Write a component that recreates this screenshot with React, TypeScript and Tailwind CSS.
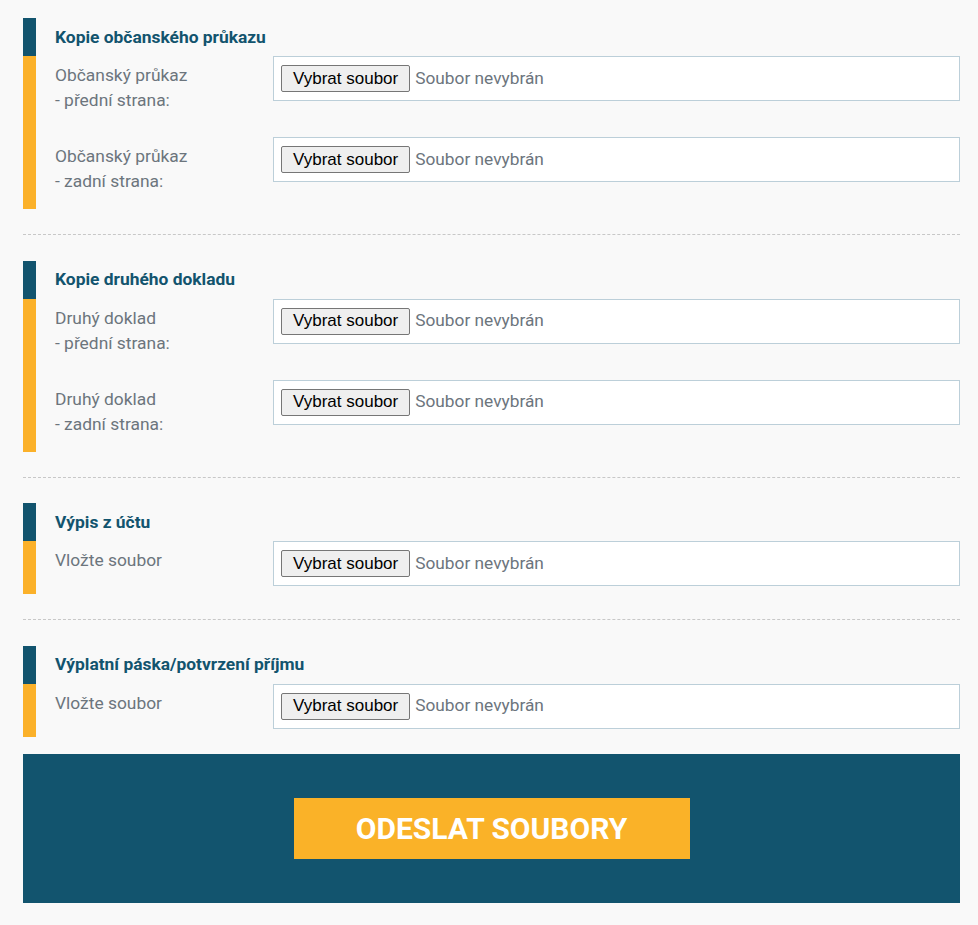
import React from "react";

const DARK = "border-[#12546e]";

function FileField() {
  return (
    <div className="flex h-[45px] flex-1 items-center border border-[#bccfd9] bg-white pl-[7px]">
      <span className="flex h-[27px] items-center rounded-[2px] border border-[#767676] bg-[#efefef] px-[11px] font-['Liberation_Sans',Arial,sans-serif] text-[17px] text-black">
        Vybrat soubor
      </span>
      <span className="ml-[5px] text-[17.3px] text-[#6c757d]">Soubor nevybrán</span>
    </div>
  );
}

function Row({ lines }: { lines: string[] }) {
  return (
    <div className="flex items-start">
      <div className="mb-[15px] w-[237px] shrink-0 pl-[19px] pt-[7px] text-[17.4px] leading-[25px] text-[#6c757d]">
        {lines.map((l, i) => (
          <div key={i}>{l}</div>
        ))}
      </div>
      <div className="mb-[8px] flex flex-1">
        <FileField />
      </div>
    </div>
  );
}

function Section({ title, rows }: { title: string; rows: string[][] }) {
  return (
    <section>
      <div className={`flex h-[38px] items-center border-l-[13px] ${DARK} pl-[19px] text-[17.4px] font-bold text-[#12546e]`}>
        {title}
      </div>
      <div className="flex flex-col gap-[9px] border-l-[13px] border-[#fbb12a]">
        {rows.map((r, i) => (
          <Row key={i} lines={r} />
        ))}
      </div>
    </section>
  );
}

function Divider() {
  return <div className="mb-[25.5px] mt-[25px] border-t border-dashed border-[#c8c8c8]" />;
}

export default function App() {
  return (
    <div className="min-h-screen bg-[#f9f9f9] pb-[22px] pl-[23px] pr-[18px] pt-[18px] font-['Roboto',sans-serif]">
      <Section
        title="Kopie občanského průkazu"
        rows={[
          ["Občanský průkaz", "- přední strana:"],
          ["Občanský průkaz", "- zadní strana:"],
        ]}
      />
      <Divider />
      <Section
        title="Kopie druhého dokladu"
        rows={[
          ["Druhý doklad", "- přední strana:"],
          ["Druhý doklad", "- zadní strana:"],
        ]}
      />
      <Divider />
      <Section title="Výpis z účtu" rows={[["Vložte soubor"]]} />
      <Divider />
      <Section title="Výplatní páska/potvrzení příjmu" rows={[["Vložte soubor"]]} />
      <div className="mt-[17px] flex justify-center bg-[#12546e] py-[44px]">
        <button className="h-[61px] w-[396px] bg-[#fab228] text-[30px] font-bold uppercase text-white">
          Odeslat soubory
        </button>
      </div>
    </div>
  );
}
